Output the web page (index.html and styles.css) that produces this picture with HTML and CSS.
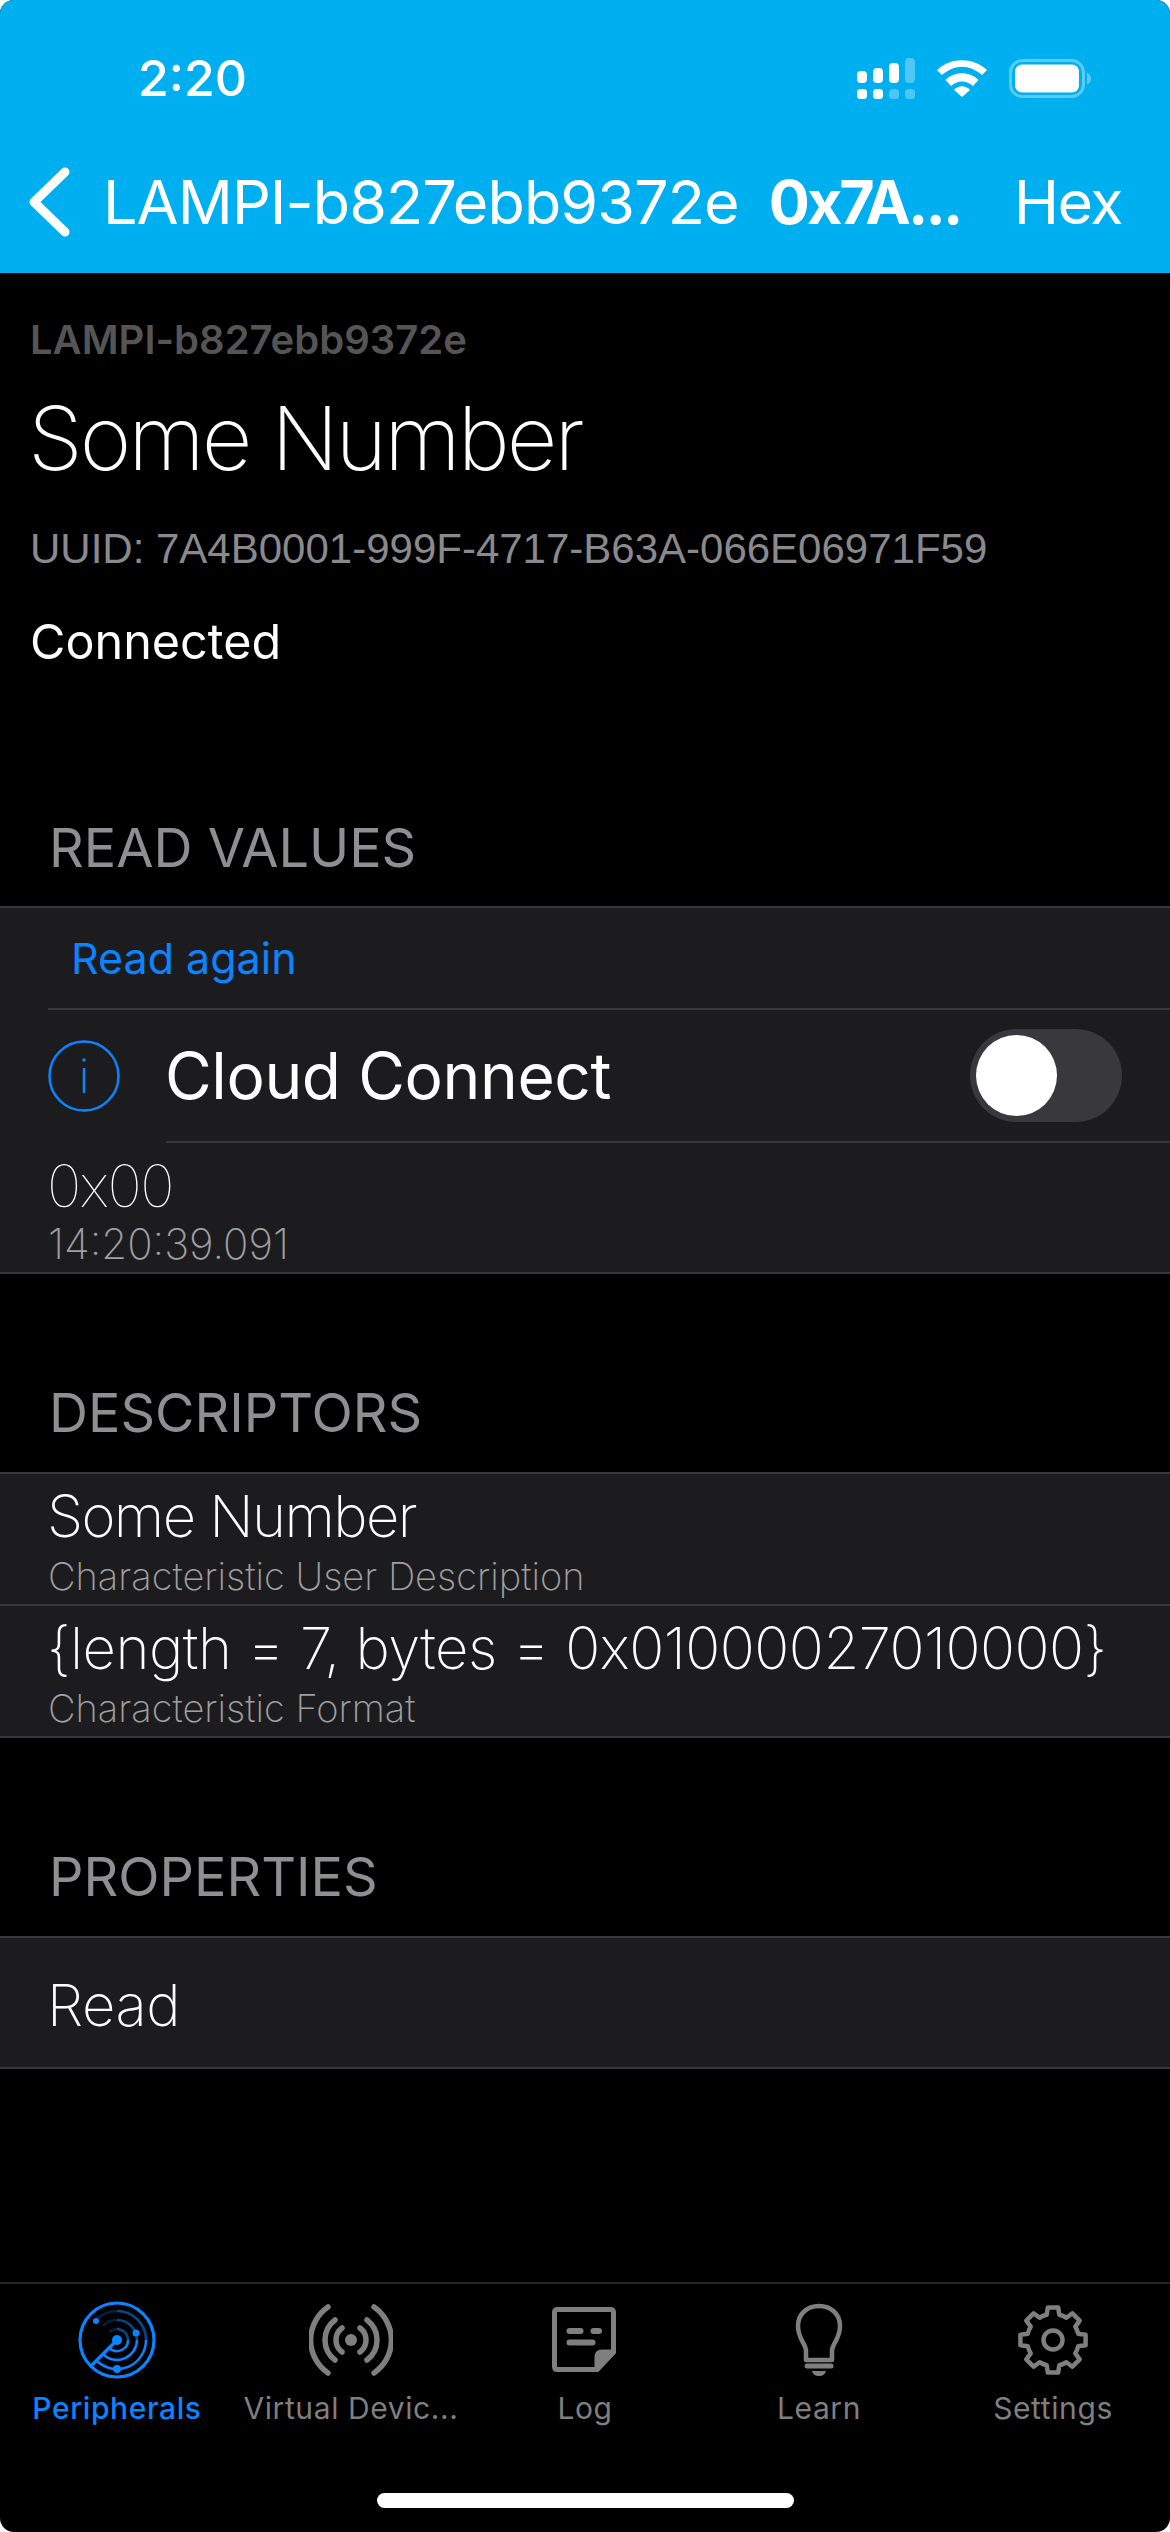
FILE: index.html

```html
<!DOCTYPE html>
<html>
<head>
  <meta charset="UTF-8">
  <title>Some Number</title>
  <link rel="stylesheet" href="styles.css">
</head>
<body>
<div class="screen">

  <header class="top">
    <div class="status">
      <span class="clock">2:20</span>
      <div class="status-icons">
        <svg width="58" height="41" viewBox="0 0 58 41" fill="#fff">
          <rect x="0" y="13" width="10" height="12" rx="4"/><rect x="0" y="31" width="10" height="10" rx="3.5"/>
          <rect x="16" y="10" width="10" height="15" rx="4"/><rect x="16" y="31" width="10" height="10" rx="3.5"/>
          <rect x="32" y="5" width="10" height="20" rx="4"/><rect x="32" y="31" width="10" height="10" rx="3.5" opacity=".3"/>
          <rect x="48" y="0" width="10" height="25" rx="4" opacity=".3"/><rect x="48" y="31" width="10" height="10" rx="3.5" opacity=".3"/>
        </svg>
        <svg width="50" height="37" viewBox="0 0 50 37" fill="#fff">
          <path d="M0 10 C14 -3 36 -3 50 10 L45 15 C32 4 18 4 5 15 Z"/>
          <path d="M8.5 20 C17 11 33 11 41.5 20 L36 26 C29 20 21 20 14 26 Z"/>
          <path d="M17 30 C22 25 28 25 33 30 L25 37 Z"/>
        </svg>
        <svg width="82" height="39" viewBox="0 0 82 39">
          <rect x="1.5" y="1.5" width="73" height="36" rx="12" fill="none" stroke="#fff" stroke-opacity=".35" stroke-width="3"/>
          <rect x="6" y="5.5" width="64" height="28" rx="7" fill="#fff"/>
          <path d="M78 13.5 C81 15 82 17 82 19.5 C82 22 81 24 78 25.5 Z" fill="#fff" fill-opacity=".35"/>
        </svg>
      </div>
    </div>
    <nav class="navbar">
      <svg class="back" width="43" height="70" viewBox="0 0 43 70" fill="none" stroke="#fff" stroke-width="9" stroke-linecap="round" stroke-linejoin="round">
        <path d="M37 5 L6 35 L37 65"/>
      </svg>
      <span class="nav-back">LAMPI-b827ebb9372e</span>
      <span class="nav-title">0x7A...</span>
      <span class="nav-hex">Hex</span>
    </nav>
  </header>

  <main class="content">
    <div class="intro">
      <div class="device">LAMPI-b827ebb9372e</div>
      <h1 class="char-name">Some Number</h1>
      <div class="uuid">UUID: 7A4B0001-999F-4717-B63A-066E06971F59</div>
      <div class="state">Connected</div>
    </div>

    <h2 class="section-title first">READ VALUES</h2>
    <section class="group">
      <div class="row-action"><span>Read again</span></div>
      <div class="row-cloud">
        <svg class="info" width="72" height="72" viewBox="0 0 72 72" fill="none" stroke="#0a84ff">
          <circle cx="36" cy="36" r="34.5" stroke-width="2.5"/>
          <path d="M36 28 V53" stroke-width="2.5"/>
          <circle cx="36" cy="20" r="1.8" fill="#0a84ff" stroke="none"/>
        </svg>
        <div class="cloud-inner">
          <span class="cloud-label">Cloud Connect</span>
          <div class="toggle"><div class="knob"></div></div>
        </div>
      </div>
      <div class="row-value">
        <div class="value">0x00</div>
        <div class="stamp">14:20:39.091</div>
      </div>
    </section>

    <h2 class="section-title">DESCRIPTORS</h2>
    <section class="group">
      <div class="row-desc">
        <div class="desc-main tight">Some Number</div>
        <div class="desc-sub">Characteristic User Description</div>
      </div>
      <div class="row-desc divided">
        <div class="desc-main">{length = 7, bytes = 0x01000027010000}</div>
        <div class="desc-sub">Characteristic Format</div>
      </div>
    </section>

    <h2 class="section-title">PROPERTIES</h2>
    <section class="group">
      <div class="row-prop">Read</div>
    </section>
  </main>

  <footer class="tabbar">
    <div class="tabs">
      <div class="tab active">
        <svg width="84" height="84" viewBox="0 0 84 84" fill="none" stroke="#0a84ff" stroke-width="2.5">
          <circle cx="42" cy="42" r="37" stroke-width="3.2"/>
          <!-- rings fade out going round from the sweep line -->
          <path d="M21.5 62.5 A29 29 0 0 0 71 42"/>
          <path d="M71 42 A29 29 0 0 0 42 13" stroke-opacity=".55"/>
          <path d="M42 13 A29 29 0 0 0 21.5 21.5" stroke-opacity=".25"/>
          <path d="M27.9 56.1 A20 20 0 0 0 62 42"/>
          <path d="M62 42 A20 20 0 0 0 42 22" stroke-opacity=".55"/>
          <path d="M42 22 A20 20 0 0 0 27.9 27.9" stroke-opacity=".25"/>
          <path d="M34.2 49.8 A11 11 0 0 0 53 42"/>
          <path d="M53 42 A11 11 0 0 0 42 31" stroke-opacity=".55"/>
          <path d="M42 31 A11 11 0 0 0 34.2 34.2" stroke-opacity=".25"/>
          <path d="M42 42 L16 68" stroke-width="3.2" stroke-linecap="round"/>
          <circle cx="42" cy="42" r="5" fill="#0a84ff" stroke="none"/>
          <circle cx="61" cy="35" r="3.5" fill="#0a84ff" stroke="none"/>
          <circle cx="42" cy="71" r="4" fill="#0a84ff" stroke="none"/>
          <circle cx="21" cy="23" r="3" fill="#0a84ff" stroke="none"/>
        </svg>
        <span>Peripherals</span>
      </div>
      <div class="tab">
        <svg width="84" height="84" viewBox="0 0 84 84" fill="none" stroke="#7f7f7f" stroke-width="5.5" stroke-linecap="round">
          <circle cx="42" cy="42" r="6" fill="#7f7f7f" stroke="none"/>
          <path d="M33 30 A15 15 0 0 0 33 54"/><path d="M51 30 A15 15 0 0 1 51 54"/>
          <path d="M26 22 A25 25 0 0 0 26 62"/><path d="M58 22 A25 25 0 0 1 58 62"/>
          <path d="M19 9 A40 40 0 0 0 19 75"/><path d="M65 9 A40 40 0 0 1 65 75"/>
        </svg>
        <span>Virtual Devic...</span>
      </div>
      <div class="tab">
        <svg width="84" height="84" viewBox="0 0 84 84" fill="none" stroke="#7f7f7f" stroke-width="5" stroke-linecap="round" stroke-linejoin="round">
          <path d="M54 71.5 H14.5 Q11.5 71.5 11.5 68.5 V14.5 Q11.5 11.5 14.5 11.5 H67.5 Q70.5 11.5 70.5 14.5 V54 Z"/>
          <path d="M54 71.5 V59 Q54 54 59 54 H70.5 Z" fill="#7f7f7f"/>
          <path d="M26.5 33 H37.5 M50.5 33 H56 M26.5 44.5 H49.5" stroke-width="6"/>
        </svg>
        <span>Log</span>
      </div>
      <div class="tab">
        <svg width="84" height="84" viewBox="0 0 84 84" fill="none" stroke="#7f7f7f" stroke-width="4.5" stroke-linejoin="round">
          <path d="M29 62 V53 C29 46 21 41 21 28 C21 16 30 8 42 8 C54 8 63 16 63 28 C63 41 55 46 55 53 V62 Z"/>
          <path d="M30 68 H54" stroke-width="5" stroke-linecap="round"/>
          <path d="M35 73 H49 C48 77 45 78 42 78 C39 78 36 77 35 73 Z" fill="#7f7f7f" stroke="none"/>
        </svg>
        <span>Learn</span>
      </div>
      <div class="tab">
        <svg width="84" height="84" viewBox="0 0 84 84" fill="none" stroke="#7f7f7f" stroke-width="4.5" stroke-linejoin="round">
          <circle cx="42" cy="42" r="9.5"/>
          <path transform="translate(42 42)" d="M-6.29 -25.23 L-5.16 -32.59 L5.16 -32.59 L6.29 -25.23 A26 26 0 0 1 13.39 -22.29 L19.4 -26.7 L26.7 -19.4 L22.29 -13.39 A26 26 0 0 1 25.23 -6.29 L32.59 -5.16 L32.59 5.16 L25.23 6.29 A26 26 0 0 1 22.29 13.39 L26.7 19.4 L19.4 26.7 L13.39 22.29 A26 26 0 0 1 6.29 25.23 L5.16 32.59 L-5.16 32.59 L-6.29 25.23 A26 26 0 0 1 -13.39 22.29 L-19.4 26.7 L-26.7 19.4 L-22.29 13.39 A26 26 0 0 1 -25.23 6.29 L-32.59 5.16 L-32.59 -5.16 L-25.23 -6.29 A26 26 0 0 1 -22.29 -13.39 L-26.7 -19.4 L-19.4 -26.7 L-13.39 -22.29 A26 26 0 0 1 -6.29 -25.23 Z"/>
        </svg>
        <span>Settings</span>
      </div>
    </div>
    <div class="home-wrap"><div class="home-bar"></div></div>
  </footer>

</div>
</body>
</html>
```

FILE: styles.css

```css
html, body {
  margin: 0;
  padding: 0;
  background: #fff;
}
body {
  font-family: Inter, "Liberation Sans", sans-serif;
  color: #fff;
}
.screen {
  width: 1170px;
  height: 2532px;
  background: #000;
  border-radius: 14px;
  overflow: hidden;
  display: flex;
  flex-direction: column;
}

.top {
  height: 273px;
  background: #00aff0;
  flex: none;
}
.status {
  height: 130px;
  display: flex;
  justify-content: space-between;
  align-items: center;
  padding: 26px 79px 0 138px;
  box-sizing: border-box;
}
.clock { font-size: 50px; font-weight: 500; }
.status-icons { display: flex; align-items: center; gap: 22px; }
.navbar {
  height: 143px;
  display: flex;
  align-items: center;
  padding: 0 48px 0 28px;
  font-size: 61px;
  white-space: nowrap;
}
.nav-back { margin-left: 32px; letter-spacing: -0.9px; }
.nav-title { margin-left: 30px; font-weight: 700; letter-spacing: -2.9px; }
.nav-hex { margin-left: auto; letter-spacing: -1.5px; }

.content { flex: 1; }
.intro { padding: 44px 30px 0; }
.device { font-size: 40px; font-weight: 600; color: #555; line-height: 46px; }
.char-name { margin: 25px 0 0 -2px; font-size: 88px; font-weight: 200; letter-spacing: -3px; line-height: 100px; }
.uuid { margin-top: 38px; font-family: "Liberation Sans", sans-serif; font-size: 42px; color: #8a8a8e; line-height: 46px; }
.state { margin-top: 41px; font-size: 48.5px; line-height: 58px; }

.section-title {
  margin: 0;
  padding: 109px 49px 0;
  height: 198px;
  box-sizing: border-box;
  font-size: 54px;
  font-weight: 400;
  color: #8e8e93;
  line-height: 60px;
}
.section-title.first { padding-top: 0; height: auto; margin-top: 147px; margin-bottom: 28px; }

.group {
  background: #1c1c1e;
  border-top: 2px solid #38383a;
  border-bottom: 2px solid #38383a;
}
.row-action {
  height: 100px;
  padding-left: 71px;
  display: flex;
  align-items: center;
  color: #0a84ff;
  font-size: 43px;
}
.row-cloud {
  margin-left: 48px;
  height: 131px;
  border-top: 2px solid #38383a;
  display: flex;
  align-items: center;
  gap: 45px;
}
.cloud-inner {
  flex: 1;
  align-self: stretch;
  display: flex;
  align-items: center;
  justify-content: space-between;
  padding-right: 48px;
}
.cloud-label { font-size: 64px; letter-spacing: -0.4px; }
.toggle {
  width: 152px;
  height: 93px;
  border-radius: 47px;
  background: #39393d;
  padding: 6px;
  box-sizing: border-box;
}
.knob { width: 81px; height: 81px; border-radius: 50%; background: #fff; }
.row-value {
  padding: 0 48px;
  height: 131px;
}
.row-value::before {
  content: "";
  display: block;
  height: 2px;
  margin-left: 118px;
  margin-right: -48px;
  background: #38383a;
}
.value { padding-top: 8px; margin-left: -1px; font-size: 58px; font-weight: 100; letter-spacing: -1.4px; line-height: 70px; }
.stamp { margin-top: 1px; font-size: 42px; font-weight: 200; color: #a0a0a4; line-height: 44px; }

.row-desc { height: 130px; padding: 0 48px; overflow: hidden; }
.row-desc.divided { border-top: 2px solid #38383a; }
.desc-main { margin: 7px 0 0 -1px; font-size: 58px; font-weight: 200; letter-spacing: -0.5px; line-height: 70px; white-space: nowrap; }
.desc-main.tight { letter-spacing: -1.6px; }
.desc-sub { margin-top: 3px; font-size: 38px; font-weight: 200; color: #a0a0a4; line-height: 44px; }
.row-prop { height: 129px; padding: 4px 47px 0; box-sizing: border-box; display: flex; align-items: center; font-size: 58px; font-weight: 200; letter-spacing: -0.5px; }

.tabbar {
  flex: none;
  height: 250px;
  border-top: 2px solid #262628;
  box-sizing: border-box;
}
.tabs { display: flex; padding-top: 14px; }
.tab {
  width: 234px;
  display: flex;
  flex-direction: column;
  align-items: center;
  font-size: 30px;
  letter-spacing: 0.6px;
  color: #7f7f7f;
  white-space: nowrap;
}
.tab span { margin-top: 6px; line-height: 40px; }
.tab.active { color: #0a84ff; font-weight: 500; }
.home-wrap { display: flex; justify-content: center; margin-top: 65px; }
.home-bar { width: 417px; height: 15px; border-radius: 8px; background: #fff; }
```
